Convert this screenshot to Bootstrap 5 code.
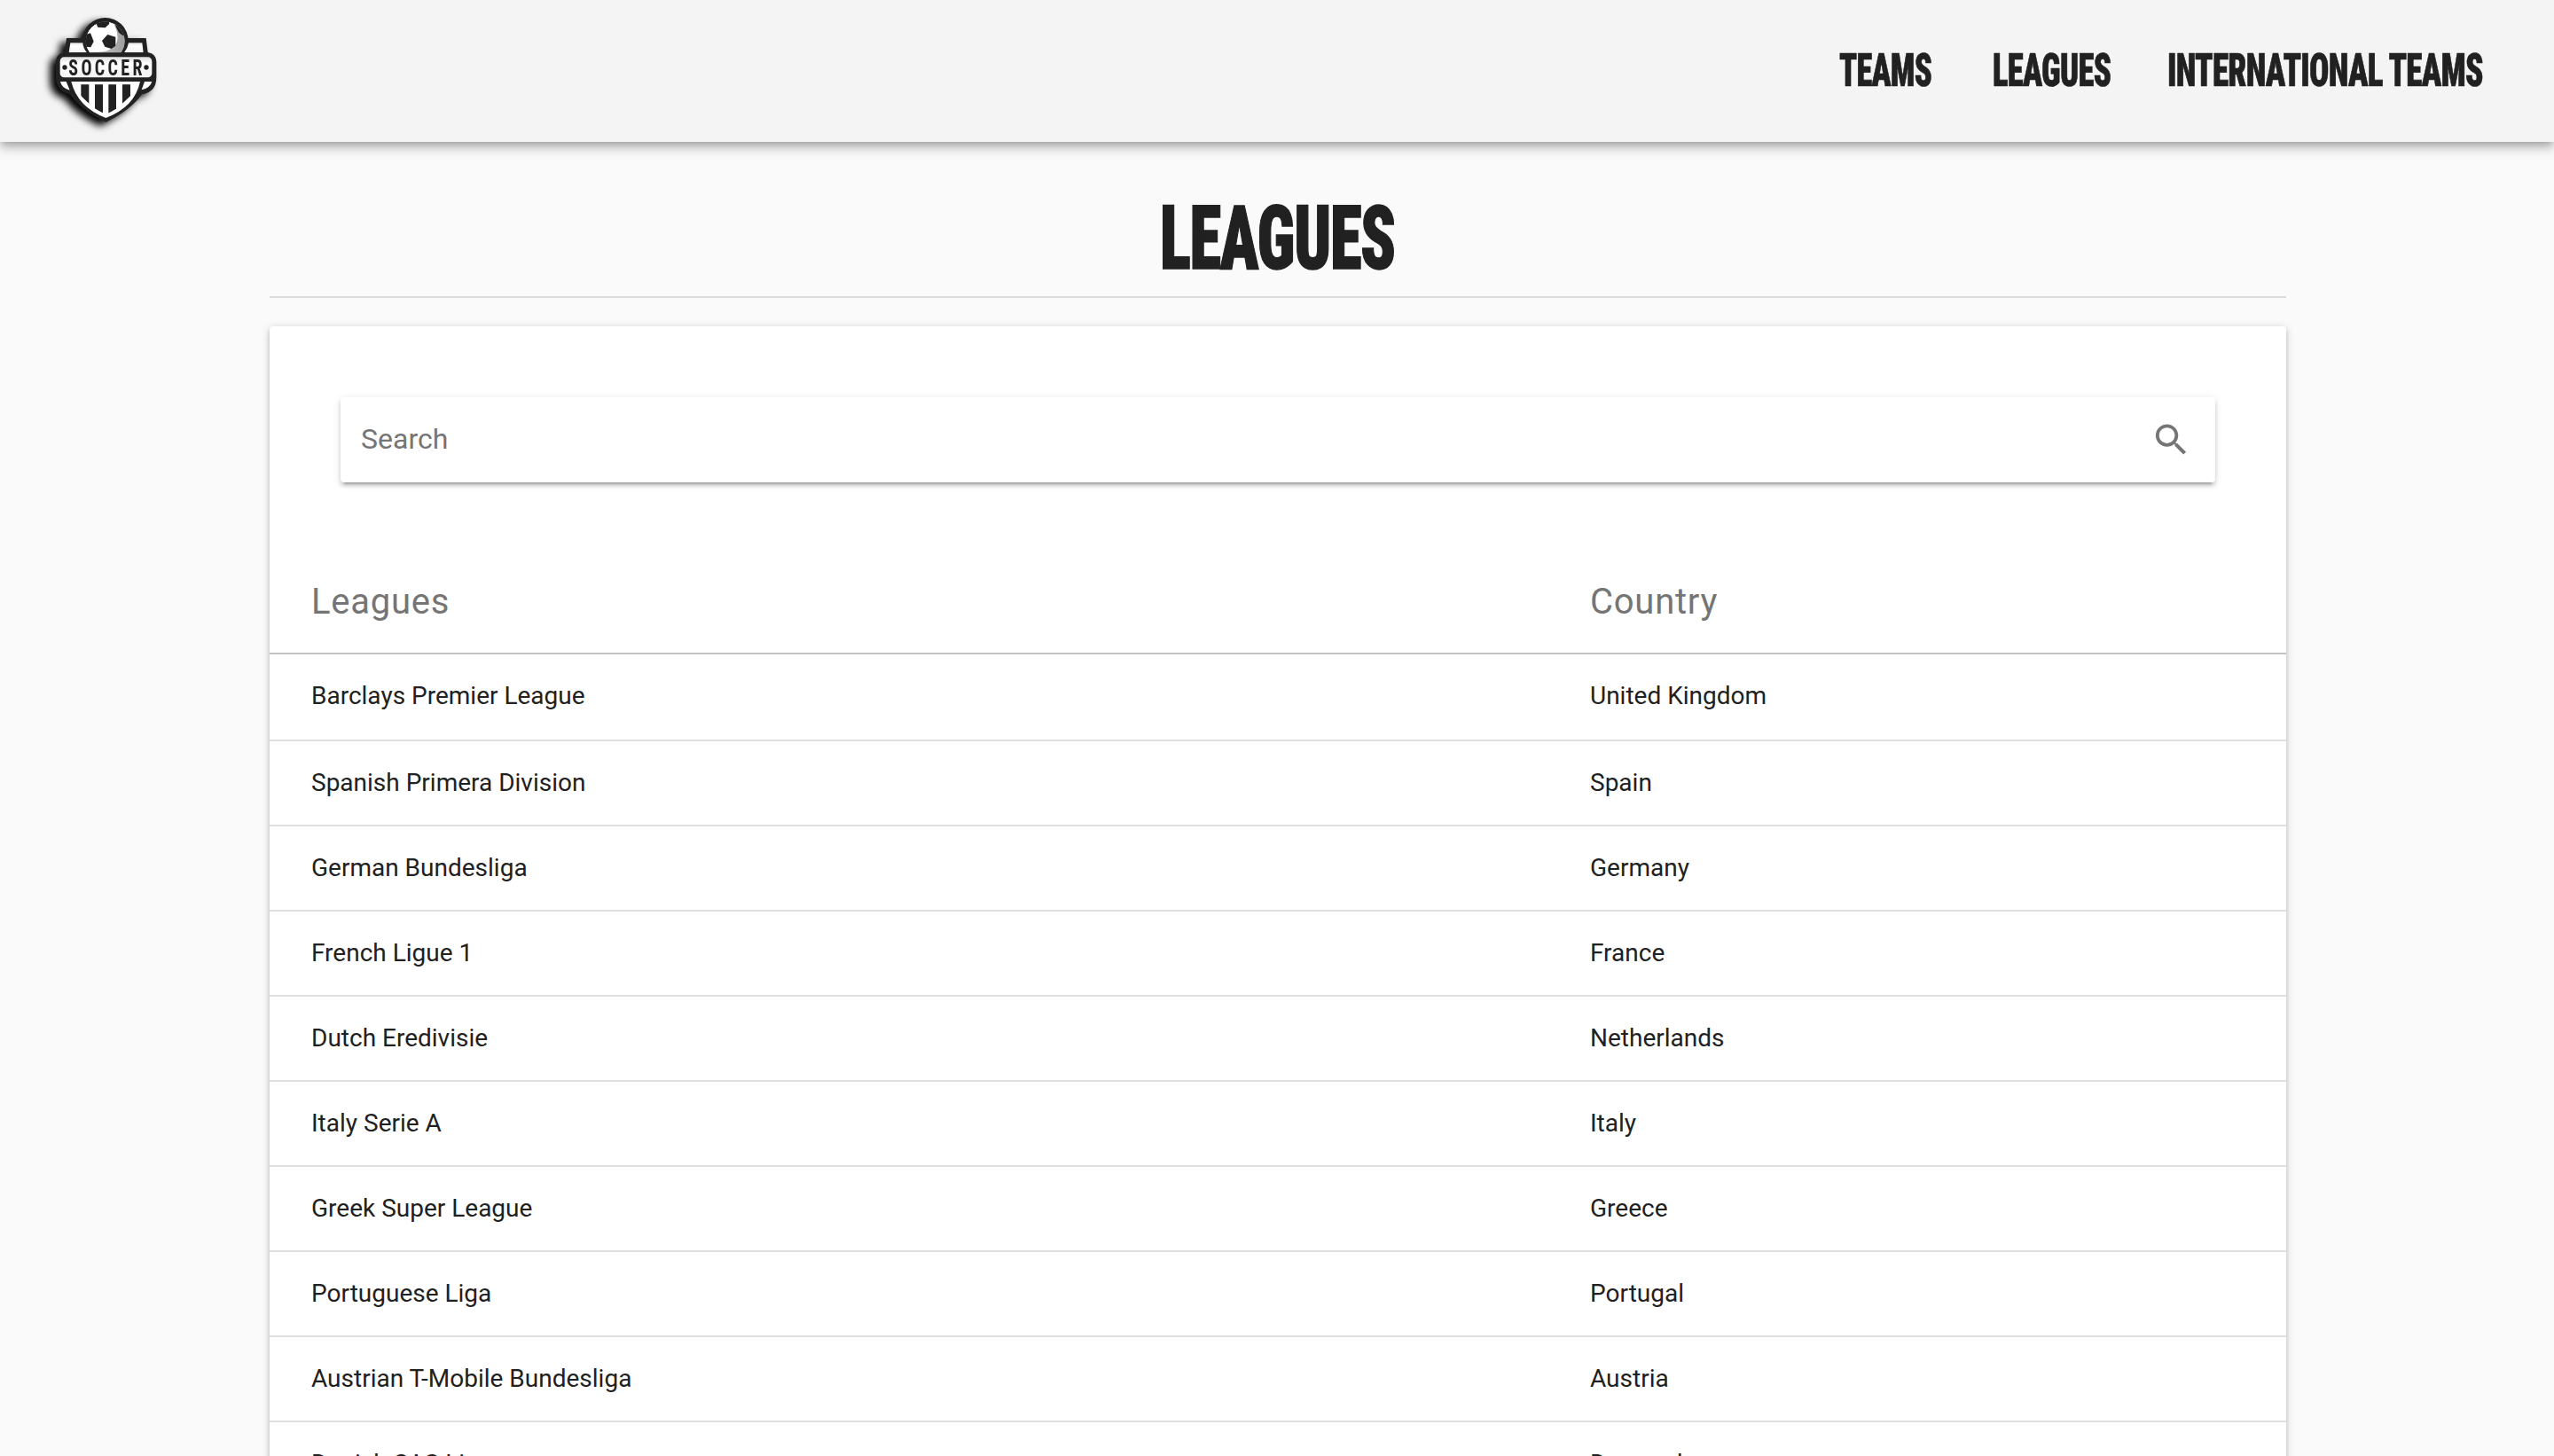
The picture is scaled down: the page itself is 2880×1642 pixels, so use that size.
<!DOCTYPE html>
<html lang="en">
<head>
<meta charset="utf-8">
<title>Leagues</title>
<link rel="stylesheet" href="https://cdn.jsdelivr.net/npm/bootstrap@5.3.0/dist/css/bootstrap.min.css">
<style>
  body { background: #fafafa; color: #212121; font-family: Roboto, sans-serif; font-size: 28px; height: 1642px; overflow: hidden; }
  .site-bar { height: 160px; padding: 0 80px 0 30px; background: #f4f4f4; box-shadow: 0 4px 8px -2px rgba(0,0,0,.2), 0 8px 10px 0 rgba(0,0,0,.14), 0 2px 20px 0 rgba(0,0,0,.12); }
  .site-logo { width: 180px; height: 160px; }
  .logo-word { font-family: Roboto, sans-serif; font-size: 80px; font-weight: 700; font-stretch: 75%; fill: #202020; }
  .condensed { display: inline-block; font-weight: 900; font-stretch: 75%; white-space: nowrap; text-transform: uppercase; letter-spacing: -.02em; transform-origin: 0 50%; line-height: 1; color: #212121; -webkit-text-stroke: .014em #212121; }
  .site-links { font-size: 52px; padding-bottom: 1px; }
  .site-links .nav-link { padding: 0; color: inherit; }
  .link-teams { width: 104px; margin-right: 69px; }
  .link-leagues { width: 133px; margin-right: 64px; }
  .link-intl { width: 356px; }
  .link-teams .condensed { transform: scaleX(.7); }
  .link-leagues .condensed { transform: scaleX(.705); }
  .link-intl .condensed { transform: scaleX(.715); }
  .page-column { width: 2274px; margin: 0 auto 0 304px; }
  .page-title { height: 174px; padding-top: 48px; padding-left: 1004px; font-size: 101px; }
  .page-title .condensed { transform: scaleX(.722); }
  .title-rule { height: 2px; background: #dcdcdc; }
  .panel { margin-top: 32px; border: 0; border-radius: 4px; height: 1400px; box-shadow: 0 2px 10px 0 rgba(0,0,0,.2), 0 4px 4px 0 rgba(0,0,0,.14), 0 6px 2px -4px rgba(0,0,0,.12); }
  .search-box { margin: 80px 80px 0; height: 96px; padding: 0 26px 0 23px; border-radius: 4px; box-shadow: 0 6px 2px -4px rgba(0,0,0,.2), 0 4px 4px 0 rgba(0,0,0,.14), 0 2px 10px 0 rgba(0,0,0,.12); }
  .search-box input { font-size: 32px; line-height: 38px; padding: 0 0 2px; color: #757575; }
  .search-box input::placeholder { color: #757575; }
  .search-box svg { width: 48px; height: 48px; fill: #757575; }
  .league-table { margin: 74px 0 0; table-layout: fixed; border-collapse: separate; border-spacing: 0; }
  .league-table > :not(caption) > * > * { padding: 27px 0 0 47px; line-height: 40px; height: 96px; vertical-align: top; border-bottom: 2px solid #e0e0e0; color: #212121; }
  .league-table tbody tr:first-child td { height: 98px; }
  .league-table thead th { height: 120px; padding-top: 37px; font-size: 40px; line-height: 48px; font-weight: 400; letter-spacing: .75px; color: #757575; border-bottom-color: #c4c4c4; }
  .league-table .col-name { width: 1442px; }
</style>
</head>
<body>
<header class="site-bar navbar flex-nowrap align-items-center justify-content-between">
  <a class="navbar-brand p-0 m-0" href="#" aria-label="Soccer">
    <svg class="site-logo d-block" viewBox="0 0 540 480">
      <defs>
        <linearGradient id="shade" x1="0" x2="0" y1="0" y2="1"><stop offset="0" stop-color="#ddd"/><stop offset=".3" stop-color="#fff"/><stop offset="1" stop-color="#f2f2f2"/></linearGradient>
        <linearGradient id="ballShade" x1="0" x2="1" y1="0" y2="0"><stop offset="0" stop-color="#ccc"/><stop offset="1" stop-color="#999"/></linearGradient>
        <clipPath id="ballClip"><circle cx="266" cy="139" r="66"/></clipPath>
        <clipPath id="cup"><path d="M164 284H374Q352 350 268 386Q184 350 164 284Z"/></clipPath>
        <filter id="cast" x="-30%" y="-30%" width="160%" height="160%"><feDropShadow dx="-20" dy="14" stdDeviation="12" flood-color="#000" flood-opacity="1"/></filter>
      </defs>
      <g filter="url(#cast)">
        <path fill="#202020" d="M135 129H404L410 177Q439 182 439 208V262Q439 312 390 319Q350 375 268 413Q186 375 146 319Q100 308 99 262V208Q99 182 128 178Z"/>
        <circle cx="266" cy="138" r="78" fill="#202020"/>
        <path fill="url(#shade)" d="M148 145H190Q191 163 204 178H143ZM345 145H391L395 178H330Q342 163 345 145Z"/>
        <g clip-path="url(#ballClip)">
          <circle cx="266" cy="139" r="66" fill="#fff"/>
          <path fill="url(#ballShade)" d="M290 70Q322 130 296 158Q270 180 215 176L260 215H345V70Z"/>
          <path fill="#202020" d="M233 74L241 92L266 94L280 80L276 66H238ZM274 117L255 138L265 158L287 165L301 155V125ZM190 120L216 112L227 140L217 160L198 158ZM296 70L303 92L312 110L325 120L345 124L330 76Z"/>
        </g>
        <path fill="#202020" d="M128 178H410V194H128Z"/>
        <rect x="113" y="193" width="311" height="69" rx="14" fill="url(#shade)"/>
        <path fill="#fff" d="M114 276H134L146 305Q118 298 114 276ZM424 276H399L389 304Q418 298 424 276Z"/>
        <path fill="#fff" d="M151 276H384Q366 362 268 399Q172 362 151 276Z"/>
        <g clip-path="url(#cup)" fill="#202020"><path d="M184 286H211V350L184 325ZM231 286H258V400H231ZM277 286H303V400H277ZM324 286H351V325L324 350Z"/></g>
        <circle cx="129" cy="228" r="8" fill="#202020"/><circle cx="405" cy="228" r="8" fill="#202020"/>
        <text class="logo-word" transform="translate(142 256) scale(.75 1)" textLength="333" lengthAdjust="spacing">SOCCER</text>
      </g>
    </svg>
  </a>
  <nav class="site-links navbar-nav flex-row">
    <a class="nav-link link-teams" href="#"><span class="condensed">Teams</span></a>
    <a class="nav-link link-leagues" href="#"><span class="condensed">Leagues</span></a>
    <a class="nav-link link-intl" href="#"><span class="condensed">International Teams</span></a>
  </nav>
</header>
<main class="page-column">
  <h1 class="page-title m-0"><span class="condensed">Leagues</span></h1>
  <div class="title-rule"></div>
  <section class="panel card">
    <div class="search-box d-flex align-items-center">
      <input class="form-control border-0 shadow-none bg-transparent flex-grow-1" type="text" placeholder="Search">
      <svg viewBox="0 0 24 24" aria-hidden="true"><path d="M15.5 14h-.79l-.28-.27C15.41 12.59 16 11.11 16 9.5 16 5.91 13.09 3 9.5 3S3 5.91 3 9.5 5.91 16 9.5 16c1.61 0 3.09-.59 4.23-1.57l.27.28v.79l5 4.99L20.49 19l-4.99-5zm-6 0C7.01 14 5 11.99 5 9.5S7.01 5 9.5 5 14 7.01 14 9.5 11.99 14 9.5 14z"/></svg>
    </div>
    <table class="league-table table">
      <thead><tr><th class="col-name">Leagues</th><th>Country</th></tr></thead>
      <tbody>
        <tr><td>Barclays Premier League</td><td>United Kingdom</td></tr>
        <tr><td>Spanish Primera Division</td><td>Spain</td></tr>
        <tr><td>German Bundesliga</td><td>Germany</td></tr>
        <tr><td>French Ligue 1</td><td>France</td></tr>
        <tr><td>Dutch Eredivisie</td><td>Netherlands</td></tr>
        <tr><td>Italy Serie A</td><td>Italy</td></tr>
        <tr><td>Greek Super League</td><td>Greece</td></tr>
        <tr><td>Portuguese Liga</td><td>Portugal</td></tr>
        <tr><td>Austrian T-Mobile Bundesliga</td><td>Austria</td></tr>
        <tr><td>Danish SAS Ligaen</td><td>Denmark</td></tr>
      </tbody>
    </table>
  </section>
</main>
<script src="https://cdn.jsdelivr.net/npm/bootstrap@5.3.0/dist/js/bootstrap.bundle.min.js"></script>
</body>
</html>
